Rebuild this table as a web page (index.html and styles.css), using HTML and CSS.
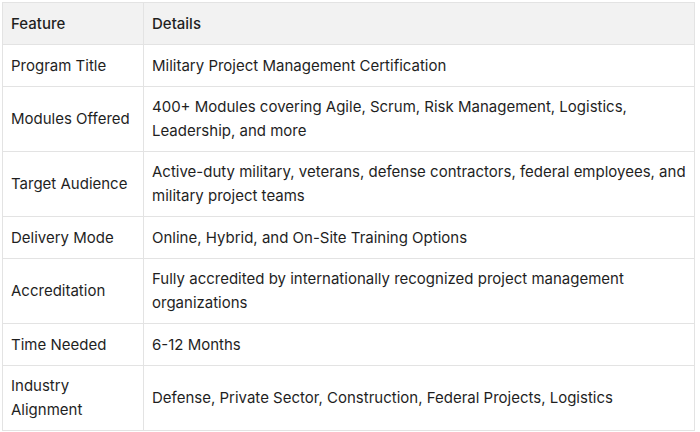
FILE: index.html
```html
<!DOCTYPE html>
<html>
<head>
<meta charset="utf-8">
<link rel="stylesheet" href="styles.css">
</head>
<body>
<table class="info">
  <thead>
    <tr><th class="col-feature">Feature</th><th>Details</th></tr>
  </thead>
  <tbody>
    <tr><td>Program Title</td><td>Military Project Management Certification</td></tr>
    <tr><td>Modules Offered</td><td>400+ Modules covering Agile, Scrum, Risk Management, Logistics, Leadership, and more</td></tr>
    <tr><td>Target Audience</td><td>Active-duty military, veterans, defense contractors, federal employees, and military project teams</td></tr>
    <tr><td>Delivery Mode</td><td>Online, Hybrid, and On-Site Training Options</td></tr>
    <tr><td>Accreditation</td><td>Fully accredited by internationally recognized project management organizations</td></tr>
    <tr><td>Time Needed</td><td>6-12 Months</td></tr>
    <tr><td>Industry Alignment</td><td>Defense, Private Sector, Construction, Federal Projects, Logistics</td></tr>
  </tbody>
</table>
</body>
</html>
```
FILE: styles.css
```css
html, body {
  margin: 0;
  background: #ffffff;
}
body {
  padding: 2px 0 0 2px;
  font-family: Inter, "Noto Sans", sans-serif;
  font-size: 15px;
  color: #1f1f1f;
}
.info {
  border-collapse: collapse;
  width: 693px;
  table-layout: fixed;
}
.info th, .info td {
  border: 1px solid #e3e3e3;
  padding: 8px 8px 8px 8px;
  height: 25px;
  line-height: 24px;
  text-align: left;
  vertical-align: middle;
}
.info th {
  background: #f2f2f2;
  font-weight: 500;
}
.col-feature {
  width: 124px;
}
```
